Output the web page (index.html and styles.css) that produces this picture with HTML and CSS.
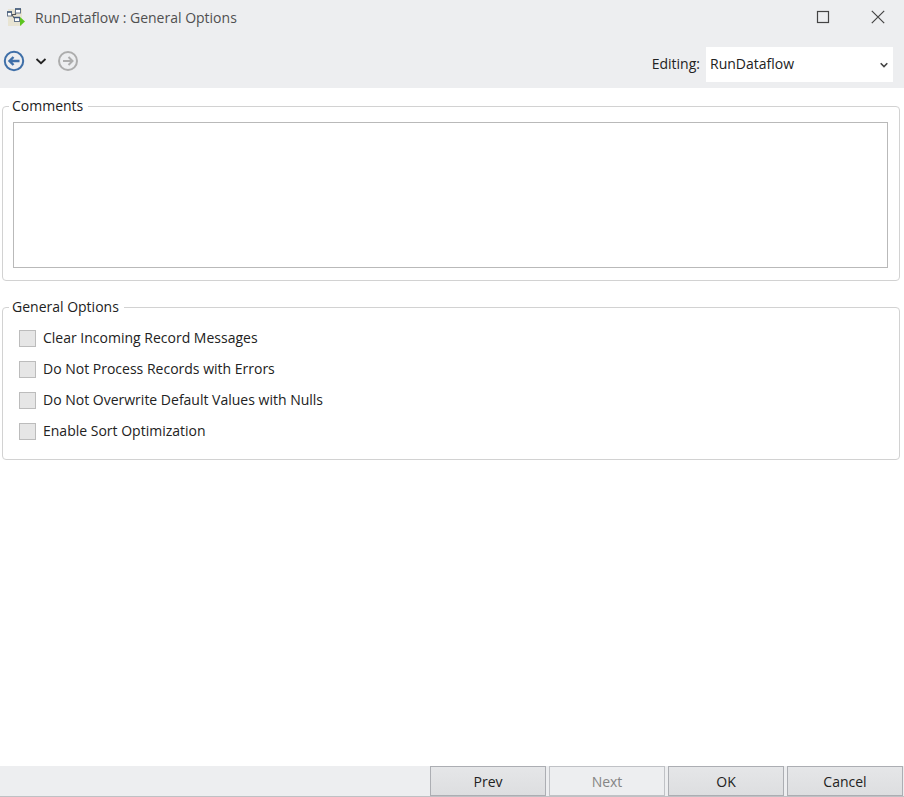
FILE: index.html
```html
<!DOCTYPE html>
<html lang="en">
<head>
<meta charset="utf-8">
<title>RunDataflow : General Options</title>
<link rel="stylesheet" href="styles.css">
</head>
<body>
<header class="header">
  <div class="titlebar">
    <svg class="app-icon" width="18" height="18" viewBox="0 0 18 18" aria-hidden="true">
      <rect x="1" y="1" width="14" height="17" fill="#e8e4d3"/>
      <path d="M5 6.500h3.500V3.500H10M5 7l3 4" fill="none" stroke="#555" stroke-width="1.200"/>
      <g fill="#fff" stroke="#66768c">
        <rect x=".5" y="4" width="4" height="4"/>
        <rect x="8.500" y="1" width="5" height="4"/>
        <rect x="7.500" y="9.500" width="5" height="4"/>
      </g>
      <path d="M0 4h5M8 1h6M7 9.500h6" stroke="#405878" stroke-width="1.500"/>
      <path d="M13 9l5 4.500-5 4.500z" fill="#5cc51f"/>
    </svg>
    <h1 class="title">RunDataflow : General Options</h1>
    <button class="window-button" type="button" aria-label="Maximize">
      <svg width="14" height="14" viewBox="0 0 14 14"><rect x="1.500" y="1.500" width="11" height="11" fill="none" stroke="#444" stroke-width="1.200"/></svg>
    </button>
    <button class="window-button" type="button" aria-label="Close">
      <svg width="14" height="14" viewBox="0 0 14 14"><path d="M.8.800l12.400 12.400M13.200.800L.8 13.200" fill="none" stroke="#444" stroke-width="1.200"/></svg>
    </button>
  </div>
  <div class="toolbar">
    <button class="nav-button" type="button" aria-label="Back">
      <svg width="22" height="22" viewBox="0 0 22 22" fill="none" stroke="#3f6fa8">
        <circle cx="11" cy="11" r="9.200" stroke-width="2"/>
        <path d="M16.500 11H7M10.500 7l-4 4 4 4" stroke-width="2.400"/>
      </svg>
    </button>
    <button class="nav-button" type="button" aria-label="History">
      <svg width="12" height="12" viewBox="0 0 12 12"><path d="M1.500 4L6 8.200 10.500 4" fill="none" stroke="#222" stroke-width="1.800"/></svg>
    </button>
    <button class="nav-button" type="button" aria-label="Forward" disabled>
      <svg width="22" height="22" viewBox="0 0 22 22" fill="none" stroke="#adadad">
        <circle cx="11" cy="11" r="9" stroke-width="2"/>
        <path d="M6 11h9.500M11.500 7l4 4-4 4" stroke-width="2"/>
      </svg>
    </button>
    <label class="editing-label" for="editing">Editing:</label>
    <div class="select-wrap">
      <select class="select" id="editing"><option>RunDataflow</option></select>
      <svg class="select-arrow" width="10" height="8" viewBox="0 0 10 8"><path d="M1.700 2.200L5 5.500l3.300-3.300" fill="none" stroke="#444" stroke-width="1.600"/></svg>
    </div>
  </div>
</header>
<main class="main">
  <fieldset class="group">
    <legend class="legend">Comments</legend>
    <textarea class="comments" aria-label="Comments"></textarea>
  </fieldset>
  <fieldset class="group">
    <legend class="legend">General Options</legend>
    <div class="options">
      <label class="option"><input class="check" type="checkbox">Clear Incoming Record Messages</label>
      <label class="option"><input class="check" type="checkbox">Do Not Process Records with Errors</label>
      <label class="option"><input class="check" type="checkbox">Do Not Overwrite Default Values with Nulls</label>
      <label class="option"><input class="check" type="checkbox">Enable Sort Optimization</label>
    </div>
  </fieldset>
</main>
<footer class="footer">
  <button class="button" type="button">Prev</button>
  <button class="button" type="button" disabled>Next</button>
  <button class="button" type="button">OK</button>
  <button class="button" type="button">Cancel</button>
</footer>
</body>
</html>
```

FILE: styles.css
```css
* {
  box-sizing: border-box;
}

body {
  margin: 0;
  min-height: 100vh;
  display: flex;
  flex-direction: column;
  background: #fff;
  color: #222;
  font: 14px/20px "Open Sans", "Noto Sans", sans-serif;
}

button,
select,
textarea {
  font: inherit;
  color: inherit;
}

svg {
  display: block;
}

.header {
  background: #edeef0;
}

.titlebar {
  display: flex;
  align-items: center;
  height: 34px;
  padding: 0 19px 0 7px;
}

.title {
  flex: 1;
  margin: 0 0 0 10px;
  padding-top: 2px;
  font-size: 14px;
  font-weight: 400;
  color: #505050;
}

.window-button,
.nav-button {
  padding: 0;
  border: 0;
  background: none;
}

.window-button + .window-button {
  margin-left: 41px;
}

.toolbar {
  display: flex;
  align-items: center;
  gap: 10px;
  height: 54px;
  padding: 0 11px 0 3px;
}

.editing-label {
  margin-left: auto;
  padding-top: 6px;
}

.select-wrap {
  position: relative;
  width: 187px;
  margin: 6px 0 0 -4px;
}

.select {
  display: block;
  width: 100%;
  height: 35px;
  padding: 0 24px 0 4px;
  border: 0;
  border-radius: 0;
  background: #fff;
  appearance: none;
}

.select-arrow {
  position: absolute;
  right: 4px;
  top: 14px;
  pointer-events: none;
}

.main {
  flex: 1;
  display: flex;
  flex-direction: column;
  gap: 16px;
  padding: 8px 4px 8px 2px;
}

.group {
  min-width: 0;
  margin: 0;
  padding: 6px 11px 12px 10px;
  border: 1px solid #d2d2d2;
  border-radius: 4px;
}

.legend {
  margin-left: -4px;
  padding: 0 5px 0 3px;
}

.comments {
  display: block;
  width: 100%;
  height: 146px;
  padding: 4px;
  border: 1px solid #b9b9b9;
  border-radius: 0;
  resize: none;
}

.options {
  display: grid;
  gap: 11px;
  padding: 5px 6px 6px;
}

.option {
  display: flex;
  align-items: center;
  gap: 7px;
}

.check {
  width: 17px;
  height: 17px;
  margin: 0;
  border: 1px solid #bcbcbc;
  background: #e6e6e6;
  appearance: none;
}

.check:checked {
  background: #3f6fa8;
}

.footer {
  display: flex;
  justify-content: flex-end;
  gap: 3px;
  padding-right: 1px;
  border-bottom: 1px solid #bfc1c4;
  background: #edeef0;
}

.button {
  width: 116px;
  height: 30px;
  padding: 2px 0 0;
  border: 1px solid #acaeb3;
  background: linear-gradient(#e5e6e8, #dddee0);
}

.button:disabled {
  border-color: #c0c2c6;
  background: #edeef0;
  color: #858585;
}
```
